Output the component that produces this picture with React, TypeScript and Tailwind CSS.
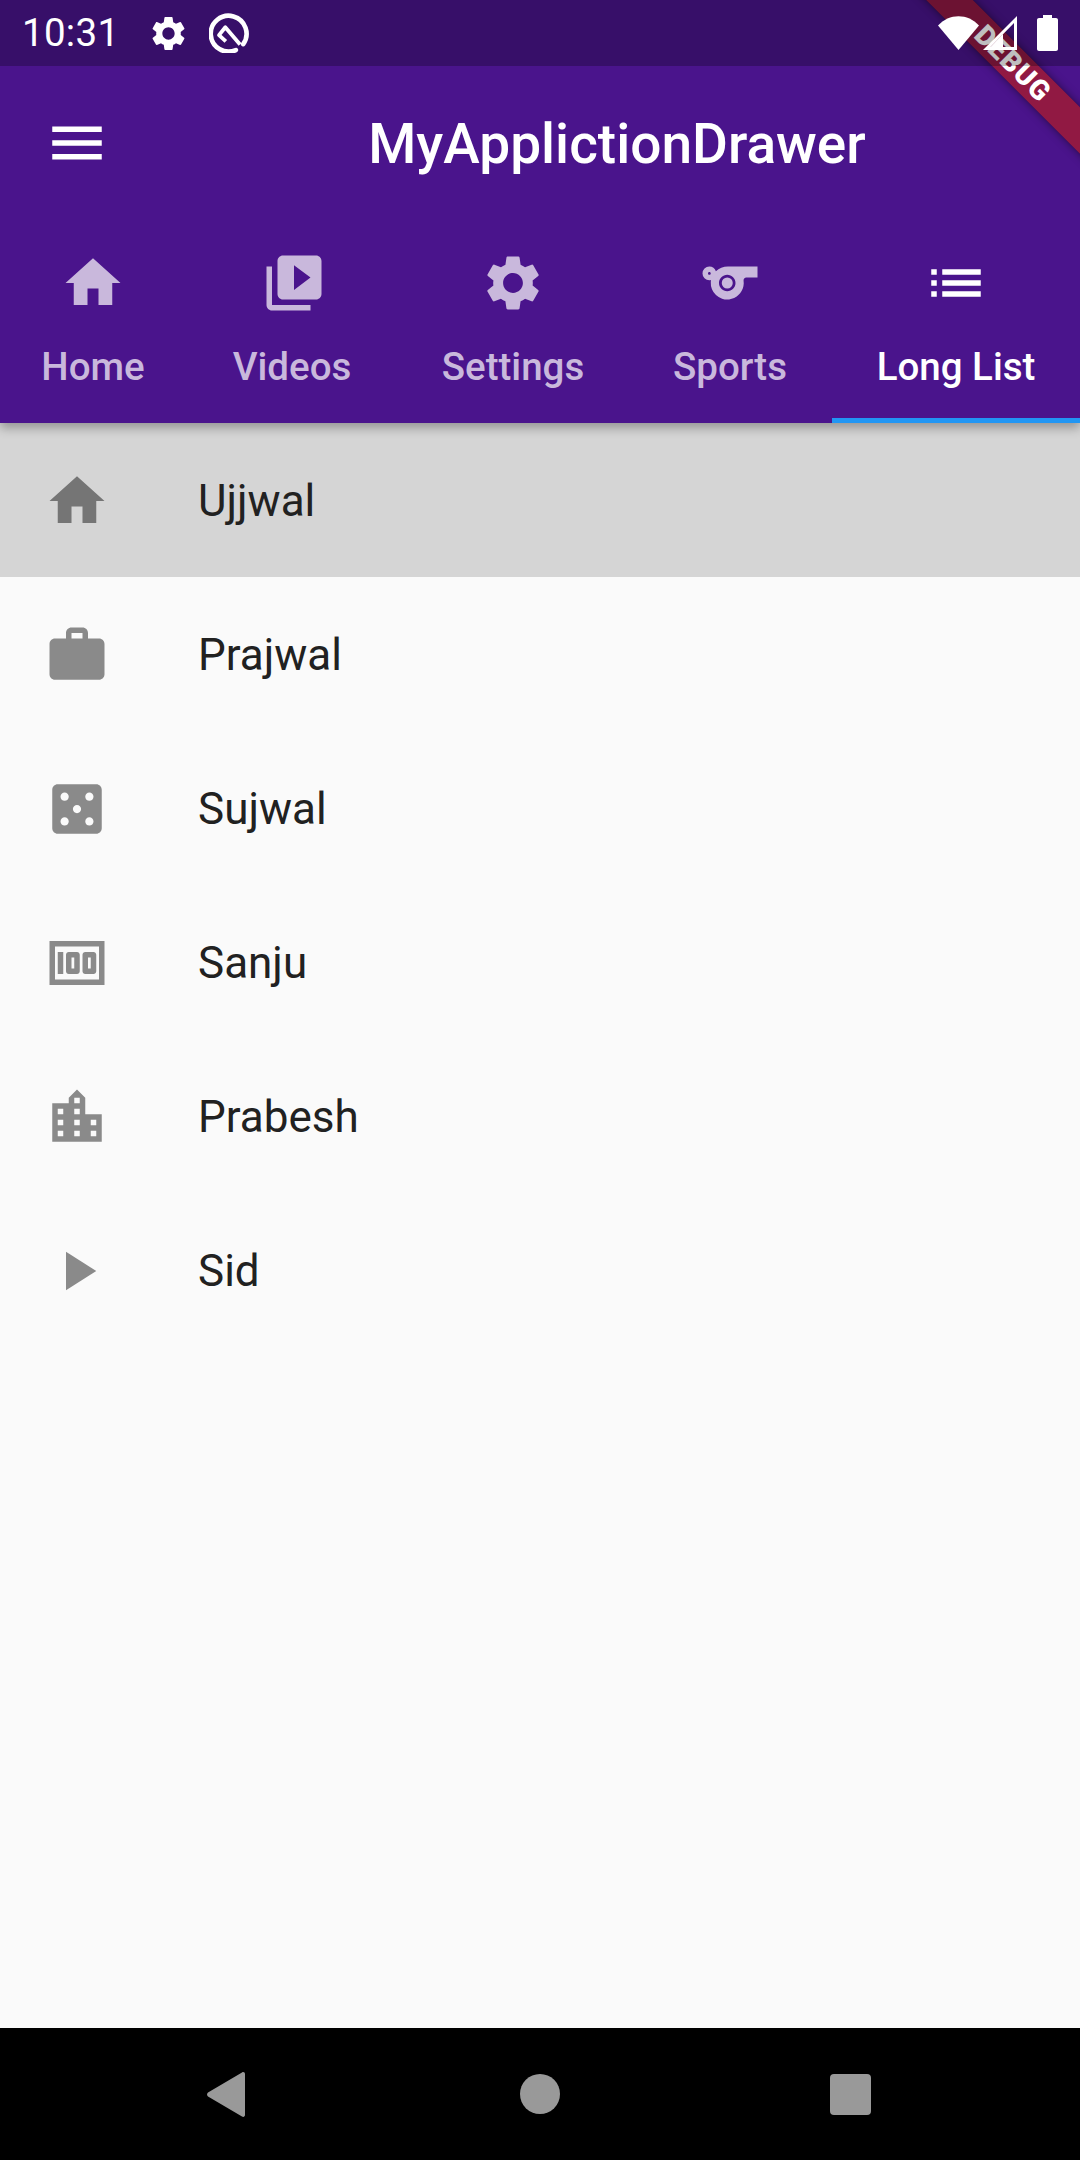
import type { ComponentType } from "react";
import {
  MdCasino,
  MdHome,
  MdList,
  MdLocationCity,
  MdMenu,
  MdMoney,
  MdPlayArrow,
  MdSettings,
  MdSports,
  MdVideoLibrary,
  MdWork,
} from "react-icons/md";

type IconType = ComponentType<{ className?: string }>;

const tabs: { label: string; icon: IconType; width: string; iconClass?: string; active?: boolean }[] = [
  { label: "Home", icon: MdHome, width: "w-[186px]" },
  { label: "Videos", icon: MdVideoLibrary, width: "w-[212px]", iconClass: "ml-[4px]" },
  { label: "Settings", icon: MdSettings, width: "w-[230px]" },
  { label: "Sports", icon: MdSports, width: "w-[204px]" },
  { label: "Long List", icon: MdList, width: "w-[248px]", active: true },
];

const people: { name: string; icon: IconType; selected?: boolean }[] = [
  { name: "Ujjwal", icon: MdHome, selected: true },
  { name: "Prajwal", icon: MdWork },
  { name: "Sujwal", icon: MdCasino },
  { name: "Sanju", icon: MdMoney },
  { name: "Prabesh", icon: MdLocationCity },
  { name: "Sid", icon: MdPlayArrow },
];

const StatusBar = () => (
  <div className="absolute top-0 left-0 z-20 flex h-[66px] w-full items-center bg-black/25 text-white">
    <span className="ml-[22px] text-[38.5px] leading-none tracking-[0.3px]">10:31</span>
    <MdSettings className="ml-[29px] h-[41px] w-[41px]" />
    <svg viewBox="0 0 38 38" className="ml-[20px] h-[40px] w-[40px]" fill="none">
      <path
        d="M25.5 35.2A17 17 0 1 1 32.5 29.5"
        stroke="currentColor"
        strokeWidth="4.4"
        strokeLinecap="round"
      />
      <path
        d="M29.5 30 15.5 13.5 9.5 21 16 27"
        stroke="currentColor"
        strokeWidth="3.6"
        strokeLinejoin="round"
      />
    </svg>
    <div className="ml-auto flex items-center">
      <svg viewBox="0 0 41 34" className="h-[34px] w-[41px]">
        <path d="M0 9.5C11-3 30-3 41 9.5L20.5 34Z" fill="currentColor" />
      </svg>
      <svg viewBox="0 0 34 34" className="ml-[4px] h-[34px] w-[34px]">
        <path d="M34 0V34H0ZM31 7 7.5 31H31Z" fill="currentColor" fillRule="evenodd" />
        <path d="M20 18V31H7.5Z" fill="currentColor" />
      </svg>
      <svg viewBox="0 0 21 36" className="mr-[22px] ml-[20px] h-[36px] w-[21px]">
        <path
          d="M6 0H15V3H19C20.1 3 21 3.9 21 5V34C21 35.1 20.1 36 19 36H2C.9 36 0 35.1 0 34V5C0 3.9.9 3 2 3H6Z"
          fill="currentColor"
        />
      </svg>
    </div>
  </div>
);

const DebugBanner = () => (
  <div className="absolute top-[47px] left-[863px] z-10 flex h-[33px] w-[300px] rotate-45 items-center justify-center bg-[#b71c1c]/65 shadow-[0_0_8px_rgba(0,0,0,0.5)]">
    <span className="text-[28px] leading-none font-black tracking-[1px] text-white">DEBUG</span>
  </div>
);

const AppHeader = () => (
  <header className="z-[5] bg-[#4a148c] pt-[66px] shadow-[0_5px_10px_rgba(0,0,0,0.3)]">
    <div className="flex h-[154px] items-center text-white">
      <div className="flex w-[154px] justify-center">
        <MdMenu className="h-[66px] w-[66px]" />
      </div>
      <h1 className="flex-1 pt-[2px] text-center text-[55px] leading-none font-medium">
        MyApplictionDrawer
      </h1>
    </div>
    <nav className="flex h-[203px]">
      {tabs.map(({ label, icon: Icon, width, iconClass, active }) => (
        <div
          key={label}
          className={`flex flex-col items-center border-b-[5px] pt-[30px] ${width} ${
            active ? "border-[#2196f3] text-white" : "border-transparent text-[#c9b8dc]"
          }`}
        >
          <Icon className={`h-[66px] w-[66px] ${iconClass ?? ""}`} />
          <span className="mt-[28px] text-[38.5px] leading-[45px] font-medium whitespace-nowrap">
            {label}
          </span>
        </div>
      ))}
    </nav>
  </header>
);

const NavBar = () => (
  <footer className="flex h-[132px] items-center bg-black pl-[207px]">
    <svg viewBox="0 0 38 45" className="h-[45px] w-[38px]">
      <path d="M38 2V43C38 44.5 36.5 45.5 35 44.5L1 24.5C-.3 23.5-.3 21.5 1 20.5L35 .5C36.5-.5 38 .5 38 2Z" fill="#999999" />
    </svg>
    <div className="ml-[275px] h-[40px] w-[40px] rounded-full bg-[#999999]" />
    <div className="ml-[270px] h-[41px] w-[41px] rounded-[4px] bg-[#999999]" />
  </footer>
);

export default function App() {
  return (
    <div className="relative flex h-[2160px] w-[1080px] flex-col overflow-hidden bg-[#fafafa] font-['Roboto',sans-serif]">
      <StatusBar />
      <DebugBanner />
      <AppHeader />
      <main className="flex-1">
        {people.map(({ name, icon: Icon, selected }) => (
          <div
            key={name}
            className={`flex h-[154px] items-center pl-[44px] ${selected ? "bg-[#d5d5d5]" : ""}`}
          >
            <Icon className={`mt-[2px] h-[66px] w-[66px] ${selected ? "text-[#757575]" : "text-[#8a8a8a]"}`} />
            <span className="ml-[88px] pt-[2px] text-[44px] leading-none text-[#212121]">{name}</span>
          </div>
        ))}
      </main>
      <NavBar />
    </div>
  );
}
